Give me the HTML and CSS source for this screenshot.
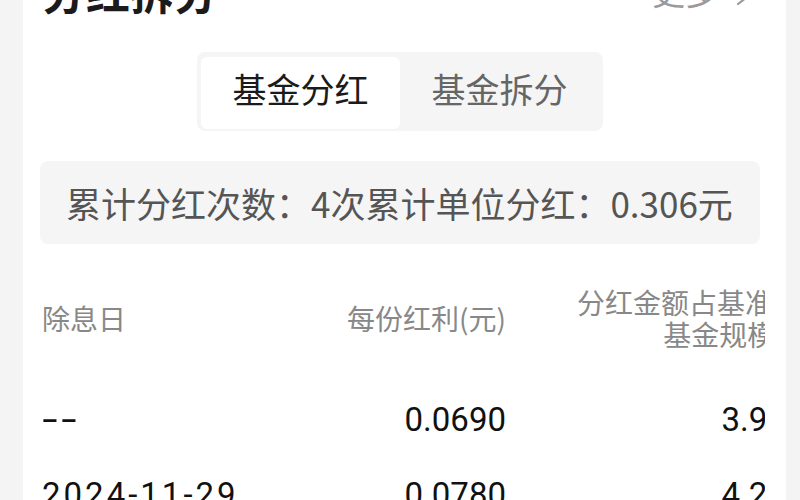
FILE: index.html
```html
<!DOCTYPE html>
<html lang="zh-CN">
<head>
<meta charset="utf-8">
<title>分红拆分</title>
<link rel="stylesheet" href="styles.css">
</head>
<body>
<div class="card">
  <div class="header">
    <h2 class="title">分红拆分</h2>
    <div class="more">更多<svg class="chev" width="24" height="30" viewBox="0 0 24 30"><polyline points="4,2 21,15 4,28" fill="none" stroke="#9a9a9a" stroke-width="2.2" stroke-linecap="round" stroke-linejoin="round"/></svg></div>
  </div>
  <div class="tabs">
    <div class="tab active">基金分红</div>
    <div class="tab">基金拆分</div>
  </div>
  <div class="summary">累计分红次数：4次累计单位分红：0.306元</div>
  <div class="table-wrap">
    <div class="table">
      <div class="row head">
        <div class="c1">除息日</div>
        <div class="c2">每份红利(元)</div>
        <div class="c3">分红金额占基准日<br>基金规模%</div>
      </div>
      <div class="row val">
        <div class="c1 dash">--</div>
        <div class="c2">0.0690</div>
        <div class="c3">3.94%</div>
      </div>
      <div class="row val">
        <div class="c1 date">2024-11-29</div>
        <div class="c2">0.0780</div>
        <div class="c3">4.27%</div>
      </div>
    </div>
  </div>
</div>
</body>
</html>
```
FILE: styles.css
```css
html, body {
  margin: 0;
  padding: 0;
  background: #f4f4f4;
  height: 500px;
  overflow: hidden;
  font-family: "Noto Sans CJK SC", "Noto Sans", sans-serif;
}

.card {
  margin-left: 23px;
  width: 763px;
  box-sizing: border-box;
  padding: 0 26px 0 17px;
  background: #fff;
  min-height: 600px;
}

.header {
  display: flex;
  justify-content: space-between;
  align-items: flex-end;
  margin-top: -31px;
  height: 44px;
  padding-left: 2px;
}

.title {
  margin: 0;
  font-size: 44px;
  line-height: 44px;
  font-weight: 700;
  color: #1b1b1b;
}

.more {
  display: flex;
  align-items: center;
  gap: 16px;
  font-size: 33px;
  line-height: 44px;
  color: #9a9a9a;
  padding-right: 2px;
}

.chev {
  display: block;
}

.tabs {
  width: 406px;
  height: 79px;
  box-sizing: border-box;
  margin: 39px auto 0;
  padding: 5px 4px 2px;
  display: flex;
  background: #f5f5f5;
  border-radius: 8px;
}

.tab {
  flex: 1;
  display: flex;
  align-items: center;
  justify-content: center;
  padding-bottom: 10px;
  font-size: 34px;
  color: #666;
  border-radius: 6px;
}

.tab.active {
  background: #fff;
  color: #1b1b1b;
}

.summary {
  margin-top: 30px;
  height: 83px;
  box-sizing: border-box;
  padding-left: 26px;
  display: flex;
  align-items: center;
  background: #f5f5f5;
  border-radius: 8px;
  font-size: 35px;
  color: #555;
  white-space: nowrap;
}

.table-wrap {
  margin-top: 10px;
  width: 725px;
  overflow: hidden;
}

.table {
  width: 770px;
}

.row {
  display: grid;
  grid-template-columns: 232px 234px 304px;
  align-items: center;
  height: 75px;
}

.row.head {
  height: 128px;
  font-size: 28px;
  line-height: 32px;
  color: #888;
}

.row.head .c3 {
  margin-right: 9px;
}

.row.val {
  font-family: Roboto, "Noto Sans CJK SC", sans-serif;
  font-size: 33px;
  color: #111;
}

.c1 {
  padding-left: 2px;
}

.c2, .c3 {
  text-align: right;
  white-space: nowrap;
}

.dash {
  font-size: 56px;
  font-weight: 300;
  line-height: 33px;
  letter-spacing: 3px;
}

.date {
  letter-spacing: 3px;
}
```
